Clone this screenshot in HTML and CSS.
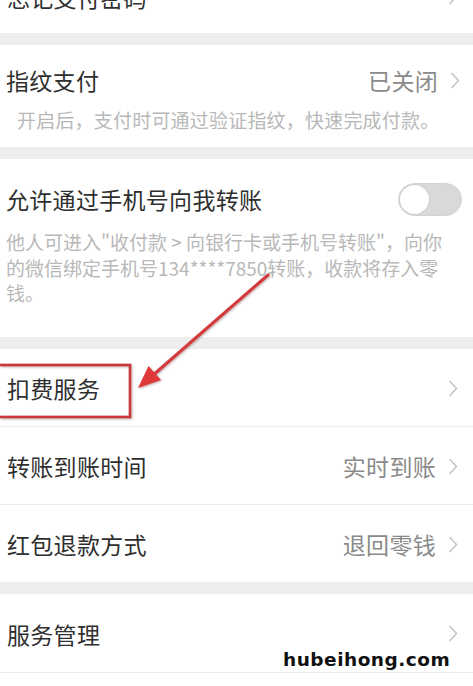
FILE: index.html
```html
<!DOCTYPE html>
<html lang="zh-CN">
<head>
<meta charset="utf-8">
<title>支付设置</title>
<link rel="stylesheet" href="styles.css">
</head>
<body>
<div class="screen">
  <div class="page">
    <section class="group">
      <div class="row row-top">
        <span class="title">忘记支付密码</span>
        <svg class="chev" viewBox="0 0 10 18"><polyline points="1.5,1.5 8.5,9 1.5,16.5"/></svg>
      </div>
    </section>

    <section class="group group-finger">
      <div class="head">
        <span class="title">指纹支付</span>
        <span class="right"><span class="value">已关闭</span><svg class="chev" viewBox="0 0 10 18"><polyline points="1.5,1.5 8.5,9 1.5,16.5"/></svg></span>
      </div>
      <p class="sub sub-finger">开启后，支付时可通过验证指纹，快速完成付款。</p>
    </section>

    <section class="group group-phone">
      <div class="head head-toggle">
        <span class="title">允许通过手机号向我转账</span>
        <span class="toggle"><span class="knob"></span></span>
      </div>
      <p class="sub sub-phone">他人可进入"收付款 &gt; 向银行卡或手机号转账"，向你的微信绑定手机号134****7850转账，收款将存入零钱。</p>
    </section>

    <section class="group">
      <div class="row sep">
        <span class="title">扣费服务</span>
        <svg class="chev" viewBox="0 0 10 18"><polyline points="1.5,1.5 8.5,9 1.5,16.5"/></svg>
      </div>
      <div class="row sep">
        <span class="title">转账到账时间</span>
        <span class="right"><span class="value">实时到账</span><svg class="chev" viewBox="0 0 10 18"><polyline points="1.5,1.5 8.5,9 1.5,16.5"/></svg></span>
      </div>
      <div class="row">
        <span class="title">红包退款方式</span>
        <span class="right"><span class="value">退回零钱</span><svg class="chev" viewBox="0 0 10 18"><polyline points="1.5,1.5 8.5,9 1.5,16.5"/></svg></span>
      </div>
    </section>

    <section class="group group-last">
      <div class="row row-last">
        <span class="title">服务管理</span>
        <svg class="chev" viewBox="0 0 10 18"><polyline points="1.5,1.5 8.5,9 1.5,16.5"/></svg>
      </div>
      <div class="filler"></div>
    </section>
  </div>

  <svg class="annot" viewBox="0 0 473 686" width="473" height="686">
    <rect x="-2" y="365" width="132" height="52" fill="none" stroke="#c9383b" stroke-width="2.6"/>
    <line x1="268" y1="275" x2="152" y2="376" stroke="#d43a3c" stroke-width="3" stroke-linecap="round"/>
    <polygon points="138,388 148.5,366 161,380" fill="#e0393b"/>
  </svg>

  <div class="watermark">hubeihong.com</div>
</div>
</body>
</html>
```

FILE: styles.css
```css
html, body {
  margin: 0;
  padding: 0;
  background: #ffffff;
}

body {
  font-family: "Noto Sans CJK SC", "Noto Sans", sans-serif;
  color: #343434;
}

.screen {
  position: relative;
  width: 473px;
  height: 686px;
  overflow: hidden;
  background: #ffffff;
}

.page {
  margin-top: -42px;
  display: flex;
  flex-direction: column;
  gap: 12px;
  background: #eeeeee;
}

.group {
  background: #ffffff;
}

.row {
  height: 77px;
  display: flex;
  align-items: center;
  justify-content: space-between;
  padding: 2px 15px 0 7px;
  box-sizing: border-box;
}

.row-top {
  height: 75px;
}

.row.sep {
  height: 78px;
  border-bottom: 1px solid #ededed;
}

.row-last {
  height: 79px;
  border-bottom: 1px solid #ededed;
}

.filler {
  height: 40px;
}

.title {
  font-size: 23px;
  letter-spacing: 0.3px;
  line-height: 30px;
  color: #2f2f2f;
}

.right {
  display: flex;
  align-items: center;
  gap: 12px;
}

.value {
  font-size: 23px;
  letter-spacing: 0.3px;
  line-height: 30px;
  color: #8a8a8a;
}

.chev {
  width: 10px;
  height: 19px;
  display: block;
}

.chev polyline {
  fill: none;
  stroke: #c6c6c6;
  stroke-width: 1.6;
  stroke-linejoin: miter;
}

.head {
  display: flex;
  align-items: center;
  justify-content: space-between;
  padding: 0 13px 0 6px;
}

.group-finger {
  padding: 20px 0 15px;
}

.group-finger .head {
  height: 30px;
}

.group-phone {
  padding: 23px 0 31px;
}

.head-toggle {
  height: 34px;
  padding-right: 11px;
}

.sub {
  margin: 0;
  font-size: 19px;
  color: #b8b8b8;
}

.sub-finger {
  margin-top: 12px;
  line-height: 25px;
  padding-left: 17px;
  letter-spacing: 0.2px;
}

.sub-phone {
  margin-top: 13px;
  line-height: 25.5px;
  padding: 0 22px 0 6px;
}

.toggle {
  width: 64px;
  height: 33px;
  box-sizing: border-box;
  border-radius: 17px;
  background: #d9d9d9;
  border: 1px solid #d2d2d2;
  display: flex;
  align-items: center;
  padding: 0 1px;
}

.knob {
  width: 29px;
  height: 29px;
  border-radius: 50%;
  background: #ffffff;
  box-shadow: 0 0 0 1px #cfcfcf;
}

.annot {
  position: absolute;
  left: 0;
  top: 0;
  filter: drop-shadow(1px 1px 1px rgba(90, 20, 20, 0.35));
  pointer-events: none;
}

.watermark {
  position: absolute;
  left: 283px;
  top: 648px;
  font-family: "DejaVu Sans", sans-serif;
  font-weight: bold;
  font-size: 18.5px;
  letter-spacing: 0.5px;
  line-height: 24px;
  color: #111111;
}
```
